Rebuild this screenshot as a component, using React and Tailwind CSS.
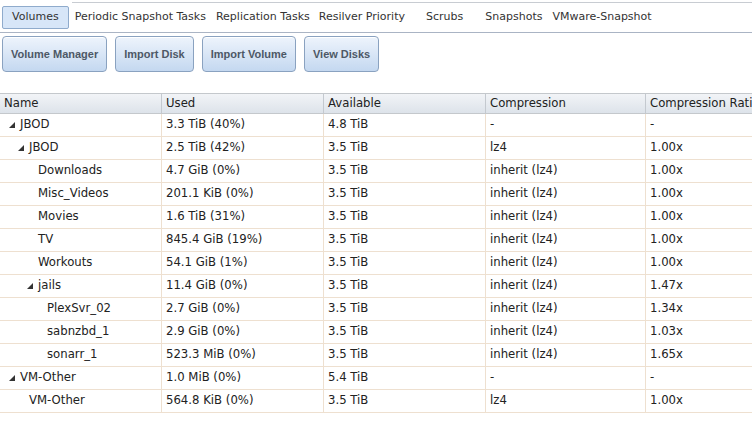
import React from "react";

const rows = [
  { name: "JBOD", lvl: 0, exp: true, used: "3.3 TiB (40%)", avail: "4.8 TiB", comp: "-", ratio: "-" },
  { name: "JBOD", lvl: 1, exp: true, used: "2.5 TiB (42%)", avail: "3.5 TiB", comp: "lz4", ratio: "1.00x" },
  { name: "Downloads", lvl: 2, used: "4.7 GiB (0%)", avail: "3.5 TiB", comp: "inherit (lz4)", ratio: "1.00x" },
  { name: "Misc_Videos", lvl: 2, used: "201.1 KiB (0%)", avail: "3.5 TiB", comp: "inherit (lz4)", ratio: "1.00x" },
  { name: "Movies", lvl: 2, used: "1.6 TiB (31%)", avail: "3.5 TiB", comp: "inherit (lz4)", ratio: "1.00x" },
  { name: "TV", lvl: 2, used: "845.4 GiB (19%)", avail: "3.5 TiB", comp: "inherit (lz4)", ratio: "1.00x" },
  { name: "Workouts", lvl: 2, used: "54.1 GiB (1%)", avail: "3.5 TiB", comp: "inherit (lz4)", ratio: "1.00x" },
  { name: "jails", lvl: 2, exp: true, used: "11.4 GiB (0%)", avail: "3.5 TiB", comp: "inherit (lz4)", ratio: "1.47x" },
  { name: "PlexSvr_02", lvl: 3, used: "2.7 GiB (0%)", avail: "3.5 TiB", comp: "inherit (lz4)", ratio: "1.34x" },
  { name: "sabnzbd_1", lvl: 3, used: "2.9 GiB (0%)", avail: "3.5 TiB", comp: "inherit (lz4)", ratio: "1.03x" },
  { name: "sonarr_1", lvl: 3, used: "523.3 MiB (0%)", avail: "3.5 TiB", comp: "inherit (lz4)", ratio: "1.65x" },
  { name: "VM-Other", lvl: 0, exp: true, used: "1.0 MiB (0%)", avail: "5.4 TiB", comp: "-", ratio: "-" },
  { name: "VM-Other", lvl: 1, used: "564.8 KiB (0%)", avail: "3.5 TiB", comp: "lz4", ratio: "1.00x" },
];

function Btn({ children }) {
  return (
    <button
      className="h-[36px] px-[8px] rounded-[4px] border border-[#8aa2c0] bg-gradient-to-b from-[#eef4fc] to-[#c4d8f0] text-[11px] font-bold text-[#4d5866] shadow-[inset_0_1px_0_#ffffff]"
      style={{ fontFamily: '"Liberation Sans", Arial, sans-serif' }}
    >
      {children}
    </button>
  );
}

function Tri() {
  return (
    <svg width="6" height="6" viewBox="0 0 6 6" className="shrink-0">
      <polygon points="6,0 6,6 0,6" fill="#333" />
    </svg>
  );
}

export default function App() {
  return (
    <div
      className="w-[752px] h-[434px] overflow-hidden bg-white text-[#222]"
      style={{ fontFamily: '"DejaVu Sans", Verdana, sans-serif' }}
    >
      <div className="ml-[72px] mt-[2px] h-[1px] bg-[#c8ccd2]" />
      <div className="flex items-center h-[30px] border-b border-[#aab4c4] pl-[2px] text-[11px] text-[#333]">
        <div className="h-[23px] px-[9px] flex items-center rounded-[2px] border border-[#8fabcc] bg-[#d7e6f8]">Volumes</div>
        <span className="ml-[6px]">Periodic Snapshot Tasks</span>
        <span className="ml-[10px]">Replication Tasks</span>
        <span className="ml-[9px]">Resilver Priority</span>
        <span className="ml-[21px]">Scrubs</span>
        <span className="ml-[22px]">Snapshots</span>
        <span className="ml-[10px]">VMware-Snapshot</span>
      </div>
      <div className="flex gap-[8px] pl-[2px] pt-[3px]">
        <Btn>Volume Manager</Btn>
        <Btn>Import Disk</Btn>
        <Btn>Import Volume</Btn>
        <Btn>View Disks</Btn>
      </div>
      <div className="mt-[21px] w-[820px] text-[11.7px]">
        <div className="flex h-[21px] items-center bg-gradient-to-b from-[#f2f4f7] to-[#dde3ea] border-t border-[#c4c8cc] border-b border-[#a8b0ba] text-[#222]">
          <div className="w-[162px] h-full flex items-center pl-[4px] border-r border-[#c4c9cf]">Name</div>
          <div className="w-[162px] h-full flex items-center pl-[4px] border-r border-[#c4c9cf]">Used</div>
          <div className="w-[162px] h-full flex items-center pl-[4px] border-r border-[#c4c9cf]">Available</div>
          <div className="w-[160px] h-full flex items-center pl-[4px] border-r border-[#c4c9cf]">Compression</div>
          <div className="flex-1 h-full flex items-center pl-[4px]">Compression Ratio</div>
        </div>
        {rows.map((r, i) => (
          <div key={i} className="flex h-[23px] items-center border-b border-[#eee0d0]">
            <div className="w-[162px] h-full flex items-center border-r border-[#eee0d0]" style={{ paddingLeft: 9 + r.lvl * 9 }}>
              <div className="w-[11px] flex items-center">{r.exp ? <Tri /> : null}</div>
              <span>{r.name}</span>
            </div>
            <div className="w-[162px] h-full flex items-center pl-[4px] border-r border-[#eee0d0]">{r.used}</div>
            <div className="w-[162px] h-full flex items-center pl-[4px] border-r border-[#eee0d0]">{r.avail}</div>
            <div className="w-[160px] h-full flex items-center pl-[4px] border-r border-[#eee0d0]">{r.comp}</div>
            <div className="flex-1 h-full flex items-center pl-[4px]">{r.ratio}</div>
          </div>
        ))}
      </div>
    </div>
  );
}
